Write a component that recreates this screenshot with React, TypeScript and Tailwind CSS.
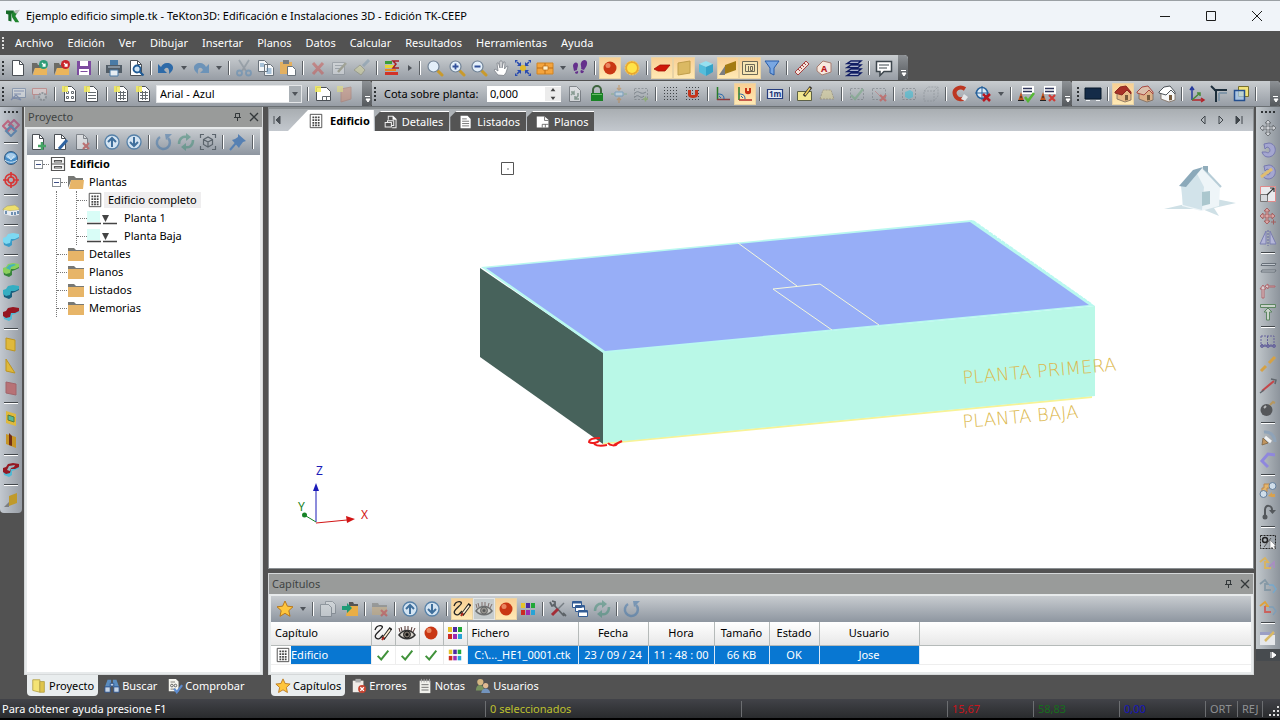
import type { ReactNode } from "react";
import { clsx } from "clsx";

const page = <path d="M3.5 1.5h7l4 4v11h-11z" fill="#fff" stroke="#4a4f55" />;
const pageFold = <path d="M10.5 1.5v4h4" fill="none" stroke="#4a4f55" />;
const folder = (
  <>
    <path d="M1 4h5l1 2h4v3H4l-3 7z" fill="#6b6b66" />
    <path d="M4 9h12v7H2z" fill="#eab55c" />
  </>
);
const spark = <path d="M1 1h6v6H1z" fill="#f2ea5e" opacity=".85" />;
const dashed = <path d="M2.5 3.5h13v11h-13z" fill="none" stroke="#6c7378" strokeDasharray="2 1.5" />;
const grid16 = "M2 2h1v1H2zM5 2h1v1H5zM8 2h1v1H8zM11 2h1v1h-1zM14 2h1v1h-1zM2 5h1v1H2zM5 5h1v1H5zM8 5h1v1H8zM11 5h1v1h-1zM14 5h1v1h-1zM2 8h1v1H2zM5 8h1v1H5zM8 8h1v1H8zM11 8h1v1h-1zM14 8h1v1h-1zM2 11h1v1H2zM5 11h1v1H5zM8 11h1v1H8zM11 11h1v1h-1zM14 11h1v1h-1zM2 14h1v1H2zM5 14h1v1H5zM8 14h1v1H8zM11 14h1v1h-1zM14 14h1v1h-1z";
const lens = (
  <>
    <path d="M11 11l5 5" stroke="#c99a2c" strokeWidth="3" strokeLinecap="round" />
    <circle cx="7.5" cy="7.5" r="5.5" fill="#e3effa" stroke="#718396" strokeWidth="1.2" />
  </>
);
const star = <path d="M9 1l2.4 5.2 5.6.6-4.2 3.8 1.2 5.7-5-3-5 3 1.2-5.7L1 6.8l5.6-.6z" fill="#ffc63c" stroke="#b9781d" />;
const check = (color: string) => <path d="M3 10l4 4 8-10" fill="none" stroke={color} strokeWidth="2.2" />;
const cross = <path d="M10 10l6 6m0-6l-6 6" stroke="#cf3b35" strokeWidth="2.2" />;
const roundArrow = (d: string) => (
  <>
    <circle cx="9" cy="9" r="7" fill="#d4e4f2" stroke="#5580a8" strokeWidth="1.3" />
    <path d={d} fill="none" stroke="#3f6f9c" strokeWidth="2" />
  </>
);
// the L-shaped block of the volume tools
const solid = (top: string, side: string) => (
  <>
    <path d="M1 8l1 6 5 2 3-2v-4l3-1 4-2V4L9 5z" fill={side} />
    <path d="M1 11V7l3-1 2-3 5-1 6 1v3l-4 2H9l-1 4-4 1z" fill={top} />
  </>
);
const docBadge = (color: string) => (
  <>
    {folder}
    <circle cx="12.5" cy="5.5" r="4.5" fill={color} />
    <path d="M11 4l3 3m0-2.5V7h-2.5" fill="none" stroke="#fff" strokeWidth="1.3" />
  </>
);
const house = (roof: string, wall: string, line: string) => (
  <>
    <path d="M3 7l5 2 5-4 4 4v6l-6 2-8-3z" fill={wall} stroke="#7c6a5a" strokeWidth=".8" />
    <path d="M1 7l5-5 6-1 5 6v2l-4-4-5 5-7-2z" fill={roof} stroke={line} strokeWidth="1" />
    <path d="M11 10h3v5l-3 .5z" fill="#765b3d" />
  </>
);

// every drawing sits in an 18 x 18 box
const icons: Record<string, ReactNode> = {
  new: <>{page}{pageFold}</>,
  open: docBadge("#2e9c78"),
  close: docBadge("#c9252b"),
  save: <><path d="M2 2h14v14H2z" fill="#7d4ba0" /><path d="M5 2h8v5H5zM4 10h10v6H4z" fill="#fff" /><path d="M5.5 12.5h7" stroke="#7d4ba0" /></>,
  print: <><path d="M5 1h8v5H5z" fill="#4a7ba6" /><path d="M1 6h16v8H1z" fill="#525d67" /><path d="M5 11h8v6H5z" fill="#e8eef3" stroke="#4a7ba6" /><path d="M3 8h12" stroke="#b8c8d6" /></>,
  preview: <>{page}{pageFold}<circle cx="10" cy="10" r="3.5" fill="#cfe4f5" stroke="#1f5b96" strokeWidth="1.8" /><path d="M12.5 12.5l4 4" stroke="#1f5b96" strokeWidth="2.2" /></>,
  undo: <path d="M1 5v9h9l-3-3c2-4 6-3 5 4 7-5 4-11-2-11-3 0-5 2-6 4z" fill="#2d6aa8" />,
  redo: <path d="M17 5v9H8l3-3c-2-4-6-3-5 4C-1 10 2 4 8 4c3 0 5 2 6 4z" fill="#6c93b8" />,
  cut: <g fill="none" stroke="#7b8791" strokeWidth="1.8"><path d="M4 1l7 11M14 1L7 12" /><circle cx="4.5" cy="14" r="2.5" stroke="#5688b4" /><circle cx="13.5" cy="14" r="2.5" stroke="#5688b4" /></g>,
  copy: <><path d="M1.5 1.5h6l3 3v8h-9zM7.5 5.5h6l3 3v8h-9z" fill="#f4f6f8" stroke="#6a737b" /><path d="M3 5h4M3 7h4M9.5 10h5M9.5 12h5M9.5 14h5" stroke="#5b8db8" /></>,
  paste: <><path d="M1 3h12v12H1z" fill="#e3b060" /><path d="M4 1h6v4H4z" fill="#787c80" /><path d="M8.5 7.5h5l3 3v6h-8z" fill="#fff" stroke="#6a737b" /></>,
  erase: <path d="M4 4l10 11M14 4L4 15" stroke="#c9524e" strokeWidth="3" />,
  editProps: <><path d="M1.5 3.5h12v12h-12z" fill="#e3e6e9" stroke="#868d94" /><path d="M4 6.5h8M4 9.5h5" stroke="#8b949c" /><path d="M7 13l8-9" stroke="#8d8d70" strokeWidth="2.5" /></>,
  brush: <><path d="M10 7l6-6" stroke="#7c96aa" strokeWidth="3" /><path d="M7 6l5 5-4 5-7-5z" fill="#d8d79a" stroke="#8b8c6c" /></>,
  sumColumns: <><path d="M2 2h7v3H2z" fill="#3a9c3a" /><path d="M2 6h10v3H2z" fill="#e6d637" /><path d="M2 10h11v2H2z" fill="#e88a1e" /><path d="M2 13h13v3H2z" fill="#d23227" /><path d="M16 2h-6l3 3-3 4h6" fill="none" stroke="#a62027" strokeWidth="1.5" /></>,
  zoom: lens,
  zoomIn: <>{lens}<path d="M4.5 7.5h6m-3-3v6" stroke="#31509a" strokeWidth="1.8" /></>,
  zoomOut: <>{lens}<path d="M4.5 7.5h6" stroke="#31509a" strokeWidth="1.8" /></>,
  hand: <path d="M6 16L2 11l1-1 3 2-1-8h1.5L8 9V2h2v7l1.5-6H13l-.5 7L15 7l1 .5-2 6-2 3z" fill="#fff" stroke="#7c8289" strokeWidth=".8" />,
  fit: <><path d="M3 3l4 4M15 3l-4 4M3 15l4-4M15 15l-4-4" stroke="#284bb0" strokeWidth="1.6" /><path d="M7 3v4H3zM11 3v4h4zM7 15v-4H3zM11 15v-4h4z" fill="#284bb0" /><path d="M1 1h3L1 4zM17 1h-3l3 3zM1 17h3l-3-3zM17 17h-3l3-3z" fill="#284bb0" /><circle cx="9" cy="9" r="3" fill="#e0b92e" /></>,
  planes: <><path d="M1 4h16v11H1z" fill="#f4a43d" stroke="#d18422" /><path d="M9 4v11M1 9h16" stroke="#b86c19" /><path d="M7 7h5v4H7z" fill="#fff1cd" stroke="#b86c19" strokeWidth=".7" /></>,
  feet: <path d="M2 7c0-4 5-5 5-1 0 2-1 3-1 5l-3 1zM4 13l3-1c1 3-3 4-3 1zM10 4c2-5 7-3 6 1 0 2-2 4-3 6l-3-1c1-2-1-4 0-6zM10 11l3 1c-1 4-5 2-3-1z" fill="#65308c" />,
  sphere: <><circle cx="9" cy="9" r="6.5" fill="#c93714" /><circle cx="7" cy="6.5" r="2.5" fill="#f39a72" opacity=".8" /></>,
  sun: <><circle cx="9" cy="9" r="7" fill="#e9a82e" strokeDasharray="2 1" stroke="#f6cb62" /><circle cx="9" cy="9" r="5" fill="#ffe348" /></>,
  slab: <path d="M1 10l6-4h10l-5 6H5z" fill="#cf1808" stroke="#a40f05" strokeWidth=".8" />,
  wall: <path d="M3 4l12-2v12L3 16z" fill="#dbb963" stroke="#c09e4b" />,
  cube: <><path d="M2 5l7-3 7 3-7 3z" fill="#96e0f0" /><path d="M2 5l7 3v9l-7-4z" fill="#54bddb" /><path d="M16 5L9 8v9l7-4z" fill="#35a3c8" /></>,
  shade: <><path d="M0 16l6-9v9z" fill="#7c7e80" /><path d="M6 6l11-4v9L6 15z" fill="#a37b13" /></>,
  wallShade: <><path d="M2 16l5-5v5z" fill="#7c7e80" /><path d="M7 5l8-3v10l-8 3z" fill="#c09a2b" /></>,
  frame: <g fill="#f7e6b4" stroke="#6e6a58"><path d="M1.5 2.5h15v13h-15zM4.5 5.5h9v7h-9z" /><path d="M7.5 7v5M9.5 11.5v-4h2v4z" fill="none" /></g>,
  filter: <path d="M2 2h14l-5 7v7l-4-2V9z" fill="#79a7e2" stroke="#285ca9" />,
  ruler: <><path d="M2 13L13 2l3 3L5 16z" fill="#f4e2da" stroke="#a64040" /><path d="M5 10l2 2m0-4l2 2m0-4l2 2m0-4l2 2" stroke="#a64040" /></>,
  tag: <><path d="M2 8l6-6 8 2v9l-9 3-5-4z" fill="#f8e9df" stroke="#a77c70" /><text x="6" y="13" fontSize="9" fontWeight="700" fill="#b8181c">A</text></>,
  layers: <g fill="#dfe4ee" stroke="#101d64" strokeWidth="1.4"><path d="M2 4.5L6 2h10l-3 2.5zM2 8.500L6 6h10l-3 2.500zM2 12.500L6 10h10l-3 2.500zM2 16.500L6 14h10l-3 2.500z" /></g>,
  comment: <><path d="M1.5 2.5h15v10H9l-4 4v-4H1.5z" fill="#fff" stroke="#3d464d" strokeWidth="1.5" /><path d="M4 6h10M4 9h8" stroke="#3d464d" /></>,
  form: <><path d="M3.5 3.5h13v9h-13z" fill="#e5e9ed" stroke="#62799c" /><path d="M5 6h10M5 9h7M2 15l5-5m0 0l5 5M3 12l9 3" stroke="#526ba0" strokeWidth="1.2" fill="none" /></>,
  gear: <><path d="M1.5 3.5h14v6h-14zM3 9v5" fill="#eed5d4" stroke="#c36762" /><circle cx="11.5" cy="11.5" r="3.5" fill="#c7c9cc" stroke="#72777c" strokeWidth="2" strokeDasharray="2 1" /></>,
  table: <>{page}<path d="M5.5 6.5h2v2h-2zM10.5 6.5h2v2h-2zM5.5 11.5h2v2h-2zM10.5 11.5h2v2h-2z" fill="none" stroke="#656b70" />{spark}</>,
  lines: <>{page}<path d="M5 7.5h8M5 10.5h8M5 13.5h8" stroke="#656b70" />{spark}</>,
  sheet: <>{page}<path d="M5 7.5h8M5 10.5h8M5 13.5h8M7.5 6v9M10.5 6v9" stroke="#656b70" />{spark}</>,
  blank: <><path d="M2.5 2.5h10l4 4v9h-14z" fill="#fff" stroke="#4a4f55" /><path d="M8.5 15v-3.5h8M12.5 12v3" fill="none" stroke="#61676c" />{spark}</>,
  door: <><path d="M5 4l10-2v12L5 17z" fill="#cf8c73" stroke="#af7361" />{spark}</>,
  refreshDoc: <>{page}<path d="M5 10l3-3v3m0-3H5M12 8v3l-3 3m0-3v3h4" fill="none" stroke="#60836c" strokeWidth="1.5" /></>,
  lock: <><path d="M5 8V5a4 4 0 018 0v3" fill="none" stroke="#3e643e" strokeWidth="2" /><path d="M3 8h12v8H3z" fill="#198325" /><path d="M4 9.5h10" stroke="#69bc68" /></>,
  updown: <><path d="M5 7h8v4H5z" fill="#c8e4f8" stroke="#4289b8" /><path d="M9 0v5M9 13v5M7 3l2 2 2-2M7 15l2-2 2 2" fill="none" stroke="#c48238" strokeWidth="1.3" /><path d="M1 9h3m10 0h3" stroke="#63a66e" /></>,
  wave: <>{dashed}<path d="M3 8c4-4 5 3 11-1M3 12c4-4 5 3 9-1" fill="none" stroke="#48545d" /><path d="M11 14h5m-2.5-2.5v5" stroke="#78ac40" strokeWidth="1.5" /></>,
  grid: <path d={grid16} fill="#3f4448" />,
  gridSnap: <><path d={grid16} fill="#3f4448" /><path d="M4 5h3v5h4V5h3v5c0 4-10 4-10 0z" fill="#c4351c" /></>,
  angle: <><path d="M3.5 2v13" stroke="#297c28" strokeWidth="1.5" /><path d="M3 14.5h13" stroke="#8b3a3c" strokeWidth="1.5" /><path d="M4 9c5 0 6 2 6 5M5 11l2 2" fill="none" stroke="#2468ad" /></>,
  angleSnap: <><path d="M3 2v13" stroke="#297c28" strokeWidth="1.5" /><path d="M3 15h13" stroke="#b4312c" strokeWidth="1.5" /><path d="M3 9c5 0 6 2 6 5M5 11l2 2" fill="none" stroke="#2468ad" /><path d="M9 3h2v3h2V3h2v4c0 3-6 3-6 0z" fill="#c43114" /></>,
  meter: <><path d="M1.5 4.5h15v9h-15z" fill="#e7edf6" stroke="#263d7e" strokeWidth="1.2" /><text x="3" y="12" fontSize="8" fontWeight="700" fill="#1c3474">1m</text></>,
  pencil: <><path d="M1.5 6.5h14v9h-14z" fill="#f1e792" stroke="#5c6046" /><path d="M8 11l7-9" stroke="#33312c" strokeWidth="3" /><path d="M9 10l5-7" stroke="#f2d05c" strokeWidth="1.5" /></>,
  region: <path d="M2 14l3-9h8l3 9z" fill="#e7d995" stroke="#94855d" strokeDasharray="2 1" />,
  regionOk: <>{dashed}{check("#6ca67a")}</>,
  regionNo: <>{dashed}<path d="M5 6l5 5" stroke="#c26a6c" />{cross}</>,
  selCube: <>{dashed}<path d="M5 7l5-2 3 2v5l-4 2-4-2z" fill="#2cc0da" /></>,
  selWire: <path d="M2 6l4-4h10v9l-4 5H2zM2 6h10v10m0-10l4-4" fill="none" stroke="#858b91" strokeDasharray="2 1" />,
  magnet: <><path d="M13 4C7 0 1 5 3 10s7 5 9 3" fill="none" stroke="#bd3722" strokeWidth="4" /><path d="M12 9l4 3-3 4-4-2z" fill="#e3e5e7" /></>,
  snapOff: <><circle cx="8" cy="8" r="5.5" fill="#dceaf6" stroke="#28629b" strokeWidth="1.5" /><path d="M8 1v14M1 8h14" stroke="#28629b" /><path d="M9 9l7 7m0-7l-7 7" stroke="#b71820" strokeWidth="2.5" /></>,
  listOk: <><path d="M5 1h12v8H5z" fill="#fff" /><path d="M6 3.5h9M6 6.5h9" stroke="#2e355a" strokeWidth="1.5" /><path d="M1 16l3-9 3 9z" fill="#bf531e" /><path d="M1 15.5h6M3 12h2" stroke="#222" /><path d="M8 12l3 4 6-8" fill="none" stroke="#55b735" strokeWidth="2.5" /></>,
  listNo: <><path d="M5 1h12v8H5z" fill="#fff" /><path d="M6 3.5h9M6 6.5h9" stroke="#2e355a" strokeWidth="1.5" /><path d="M1 16l3-9 3 9z" fill="#bf531e" /><path d="M1 15.5h6M3 12h2" stroke="#222" />{cross}</>,
  screen: <><path d="M1 3h16v11H1z" fill="#142b48" stroke="#071829" /><path d="M2 15.5h4m6 0h4" stroke="#f2f5f7" /></>,
  houseRed: house("#a83126", "#e7bb87", "#8b2a22"),
  houseOpen: house("#dcc0ac", "#ddb188", "#a84a42"),
  houseWhite: house("#fff", "#f6f7f8", "#4d5358"),
  axes: <g fill="none" strokeWidth="1.5"><path d="M4 15V3M2 5l2-3 2 3" stroke="#263a9d" /><path d="M4 15h12m-3-2l3 2-3 2" stroke="#b2232a" /><path d="M4 15l8-7m-3 0h3v3" stroke="#488a37" /></g>,
  corner: <><path d="M4 5h13M6 4v13" stroke="#1d2e3b" strokeWidth="2" /><path d="M1 1l5 5" stroke="#1d2e3b" strokeWidth="2" /><path d="M9 8h8M9 8v8" stroke="#8196a8" strokeWidth="2" /></>,
  windows: <><path d="M6.5 1.5h10v10h-10z" fill="#f3e37a" stroke="#78702d" /><path d="M2.5 5.5h10v10h-10z" fill="#a9cdf4" fillOpacity=".7" stroke="#244f8f" strokeWidth="1.5" /></>,
  links: <g fill="none" strokeWidth="2"><path d="M6 2l5 5-5 5-5-5z" stroke="#bc6680" /><path d="M12 1l5 5-5 5-5-5z" stroke="#a56385" /><path d="M9 7l5 5-5 5-5-5z" stroke="#5d83aa" /></g>,
  globe: <><circle cx="9" cy="9" r="6.5" fill="#468dc8" stroke="#3b5d80" /><ellipse cx="9" cy="7" rx="5" ry="3" fill="#a8cdea" /><path d="M3 11c3 3 9 3 12 0M6 7l3 4 3-4" stroke="#d5e9f7" fill="none" /></>,
  target: <g fill="none" stroke="#d63736" strokeWidth="1.7"><circle cx="9" cy="9" r="6" /><circle cx="9" cy="9" r="3" /><path d="M9 1v6M9 11v6M1 9h6M11 9h6" /></g>,
  building: <><path d="M1 8l4-3 8-1 4 3v2l-9 1-7-1z" fill="#eddf6b" stroke="#a8a37b" strokeWidth=".7" /><path d="M2 9l6 1 9-1v5l-8 1-7-2z" fill="#e6eaf0" /><path d="M4 10v3M10 11v3M13 11v3M16 10v3" stroke="#49749e" strokeWidth="1.5" /></>,
  solidCyan: solid("#7dd9f2", "#3a9cc7"),
  solidGreen: <>{solid("#8bd05d", "#37853b")}<path d="M4 7l3-3 5-1 2 1-5 2-1 3z" fill="#45b4b8" /></>,
  solidTeal: solid("#35aec2", "#175f7d"),
  solidRed: solid("#951721", "#51bad4"),
  panel: <path d="M4 3l9 2v11l-9-2z" fill="#dfb93c" stroke="#bd951f" />,
  triangle: <path d="M4 2l9 14-9-2z" fill="#dfb93c" stroke="#bd951f" />,
  pink: <path d="M4 3l10 2v11L4 14z" fill="#b77276" stroke="#a2656b" />,
  windowIn: <><path d="M4 2l10 3v12L4 14z" fill="#dfb93c" /><path d="M6 6l6 2v5l-6-2z" fill="#58b89a" stroke="#577a3a" /></>,
  doorIn: <><path d="M4 3l10 3v11L4 13z" fill="#c69526" /><path d="M7 2l3 3v10l-3-1z" fill="#722f15" /></>,
  redHole: <>{solid("#951721", "#51bad4")}<path d="M5 9l2-4 6-1-1 2-3 1-1 3z" fill="#9bb7c1" /></>,
  move: <path d="M9 1L6 4h2v4H4V6L1 9l3 3v-2h4v4H6l3 3 3-3h-2v-4h4v2l3-3-3-3v2h-4V4h2z" fill="#cfd2d6" stroke="#6a6e73" strokeWidth=".9" />,
  rotate: <path d="M5 3l5-1c9 1 8 14-1 14-3 0-5-2-6-5h4c4 3 6-4 1-5L6 8z" fill="#a4a6d0" stroke="#7779b0" />,
  rotateRef: <><path d="M5 3l5-1c9 1 8 14-1 14-3 0-5-2-6-5h4c4 3 6-4 1-5L6 8z" fill="#a4a6d0" stroke="#7779b0" /><path d="M2 14L13 6" stroke="#e0bd70" strokeWidth="3" /></>,
  scale: <><path d="M1.5 1.5h15v15h-15z" fill="#e9eaed" stroke="#e08a8a" /><path d="M1.5 9.5h7v7h-7z" fill="#d7d9dd" stroke="#777" /><path d="M8 10l7-7m-4 0h4v4" fill="none" stroke="#333" strokeWidth="1.2" /></>,
  copyMove: <><path d="M8 1L5 4h2v4H4V6L1 9l3 3v-2h3v4H5l3 3 3-3H9v-4h4v2l3-3-3-3v2H9V4h2z" fill="#d9a4a4" stroke="#a25e5e" strokeWidth=".9" /><path d="M12 15h5m-2.5-2.5v5" stroke="#a25e5e" /></>,
  mirror: <><path d="M7 2v13H1zM11 2v13h6z" fill="#b4b6d8" stroke="#7b7eb0" /><path d="M9 1v16" stroke="#65699f" strokeDasharray="2 1" /></>,
  parallel: <path d="M2 6.5h14l1-2H3zM2 13h14l1-2H3z" fill="#c2c8ce" stroke="#687079" />,
  extend: <path d="M3 17V8H1l3-4 3 4H5v9zM16 5H9V3L6 5l3 3V6h7z" fill="#d9cdd0" stroke="#b0666c" />,
  trim: <path d="M1.5 1.5h15v3h-15zM7.5 17V9H5l4-4 4 4h-2.5v8z" fill="#cbd4cc" stroke="#5d8662" />,
  divide: <g fill="none" stroke="#66639c"><path d="M2 3h13v9H2zM8.500 3v9" strokeDasharray="2 1" /><path d="M2 13h14" strokeWidth="1.5" /><circle cx="3" cy="13" r="1.5" /><circle cx="9" cy="13" r="1.5" /><circle cx="15" cy="13" r="1.5" /></g>,
  split: <path d="M2 16l5-5m3-3l6-6" stroke="#d5a145" strokeWidth="3" />,
  join: <><path d="M3 14L15 4" stroke="#c44649" strokeWidth="2" /><path d="M1 16l4-3M12 2l5 1-1 4" fill="none" stroke="#60666d" strokeWidth="1.5" /></>,
  bomb: <><circle cx="7.5" cy="11" r="6" fill="#55575a" /><path d="M5 9l2-2" stroke="#b7b9bb" strokeWidth="2" /><path d="M11 6l3-3 2 1" fill="none" stroke="#b6975f" strokeWidth="2" /></>,
  crayon: <><path d="M3 16l1-7 5 5z" fill="#c1955f" stroke="#7c6444" strokeWidth=".8" /><path d="M5 3c7-1 11 5 11 10" fill="none" stroke="#8fa3b8" strokeWidth="3" /><path d="M6 8l6 5" stroke="#f1f2f2" strokeWidth="3" /></>,
  poly: <path d="M16 4L9 3l-6 7 6 6" fill="none" stroke="#8f87dd" strokeWidth="3" />,
  swap: <><path d="M5 3h7v4H8v4H3V7h2z" fill="#e4b56b" stroke="#bd874b" /><circle cx="4.5" cy="13" r="3.5" fill="#d0deea" stroke="#637e9c" /><circle cx="13.5" cy="5" r="3.5" fill="#d0deea" stroke="#637e9c" /><path d="M9 15l4-4v2h3v3h-3z" fill="#d8a14e" /></>,
  hook: <><path d="M6 14V7c0-6 7-5 7 0" fill="none" stroke="#54585c" strokeWidth="2" /><path d="M10 7h7l-3.5 4z" fill="#54585c" /><circle cx="6" cy="14" r="2.5" fill="#54585c" /></>,
  select: <><path d="M1.5 2.5h15v13h-15z" fill="none" stroke="#222" strokeDasharray="2 1" /><circle cx="6" cy="7" r="2.5" fill="none" stroke="#222" strokeWidth="1.5" /><path d="M5 14l7-9" stroke="#555" /><path d="M11 7v9l2-2 2 3 1-1-1-3h2z" fill="#fff" stroke="#777" strokeWidth=".6" /></>,
  flowA: <><path d="M1 7l5-4 3 4H6v6h6" fill="none" stroke="#d9b460" strokeWidth="1.8" /><path d="M10 12l5-5v6" fill="none" stroke="#aa8ac4" strokeWidth="1.5" /></>,
  flowB: <><path d="M1 7l5-4 3 4H6v6h6" fill="none" stroke="#8699a6" strokeWidth="1.8" /><path d="M10 8h4l3 4-3 4" fill="none" stroke="#77a8cb" strokeWidth="1.5" /></>,
  flowC: <><path d="M1 7l5-4 3 4H6" fill="none" stroke="#e0a23a" strokeWidth="1.8" /><path d="M6 7v6h6" fill="none" stroke="#ca615c" strokeWidth="1.8" /><path d="M10 8h4l3 4-3 4" fill="none" stroke="#7f9eb7" strokeWidth="1.5" /></>,
  note: <><path d="M1 3h15v13H1z" fill="#e6e8eb" /><path d="M1 3h15v3H1z" fill="#9b9fc4" /><path d="M6 12l9-9" stroke="#d8b966" strokeWidth="2.5" /></>,
  add: <>{page}{pageFold}<path d="M9 13h8m-4-4v8" stroke="#46a565" strokeWidth="2.5" /></>,
  edit: <>{page}{pageFold}<path d="M8 16l8-9" stroke="#2e63a1" strokeWidth="3" /></>,
  remove: <>{page}{pageFold}{cross}</>,
  up: roundArrow("M9 14V5M5 9l4-4 4 4"),
  down: roundArrow("M9 4v9M5 9l4 4 4-4"),
  reload: <><path d="M5 4a6.500 6.500 0 108 1" fill="none" stroke="#3d72a8" strokeWidth="2.5" /><path d="M10 1h7l-6 6z" fill="#3d72a8" /></>,
  sync: <><path d="M2 11c0-6 4-8 8-7M16 7c0 6-4 8-8 7" fill="none" stroke="#3d8c74" strokeWidth="2.5" /><path d="M9 0l5 4-5 4zM9 18l-5-4 5-4z" fill="#3d8c74" /></>,
  box: <g fill="none" stroke="#5b646c" strokeWidth="1.2"><path d="M1.5 5V1.5H5M13 1.5h3.5V5M1.5 13v3.5H5M13 16.5h3.5V13" /><path d="M4.5 6.5L9 4l4.5 2.5v5L9 14l-4.5-2.5zM4.5 6.5L9 9l4.5-2.5M9 9v5" /></g>,
  pin: <><path d="M9 1l8 7-3 1-3 4-1 2-7-8 3-1 3-2z" fill="#5680b3" /><path d="M7 10l-6 7" stroke="#5680b3" strokeWidth="2" /></>,
  star,
  pages: <path d="M1.5 4.5h8l3 3v9h-11zM6.5 1.5h7l3 3v9h-4v-6l-3-3h-3z" fill="#e4e8ea" stroke="#6c757d" />,
  importDir: <><path d="M8 2h4l1 2h4v2H8z" fill="#555" /><path d="M7 6h10v10H5z" fill="#e9ae46" /><path d="M1 6h5V3l5 5-5 5v-3H1z" fill="#1e9b76" /></>,
  delDir: <><path d="M1 3h6l1 2h8v2H1z" fill="#7a7973" /><path d="M1 7h15v8H1z" fill="#c7a874" />{cross}</>,
  pen: <><path d="M1 6c2-6 9-5 7-2S-1 11 2 14s6-2 7-3" fill="none" stroke="#222" strokeWidth="1.3" /><path d="M9 15l8-11" stroke="#222" strokeWidth="3.5" /><path d="M10 13.5l6-8" stroke="#fff0d4" strokeWidth="1.5" /><path d="M8 16l2-3" stroke="#b32b20" strokeWidth="2" /></>,
  eye: <><path d="M1 11c4-6 12-6 16 0-4 5-12 5-16 0z" fill="#d6d2ca" stroke="#343434" strokeWidth="1.5" /><circle cx="9" cy="10.5" r="3.5" fill="#756e64" stroke="#222" /><circle cx="9" cy="10.5" r="1.5" fill="#111" /><path d="M2 8L1 4m3 3L3 3m4 3V2m3 4V2m3 5l1-4m1 5l2-4" stroke="#53332f" /></>,
  palette: <><path d="M2 3h4v5H2z" fill="#e4c42b" /><path d="M7 3h4v5H7z" fill="#4b2aa1" /><path d="M12 3h4v5h-4z" fill="#20a837" /><path d="M2 10h4v5H2z" fill="#cb2b21" /><path d="M7 10h4v5H7z" fill="#9d2cb5" /><path d="M12 10h4v5h-4z" fill="#27a3d6" /></>,
  tools: <><path d="M4 4l11 12" stroke="#5d6368" strokeWidth="1.8" /><path d="M15 3l-6 6" stroke="#777e84" strokeWidth="1.5" /><path d="M9 9l-6 6" stroke="#a32d38" strokeWidth="3" /><path d="M1 2l2 4 3-1V2L3 1M14 13l3 3" fill="none" stroke="#5d6368" strokeWidth="1.8" /></>,
  cascade: <g fill="#fff" stroke="#335c94"><path d="M1.5 1.5h9v6h-9zM4.5 5.5h9v6h-9zM7.5 10.5h9v6h-9z" /><path d="M2 2.5h8M5 6.5h8M8 11.5h8" strokeWidth="1.8" /></g>,
  tick: check("#40923a"),
  floors: <><path d="M2.5 1.5h13v15h-13z" fill="#fff" stroke="#444" /><path d="M5 4h2v2H5zM8 4h2v2H8zM11 4h2v2h-2zM5 7h2v2H5zM8 7h2v2H8zM11 7h2v2h-2zM5 10h2v2H5zM8 10h2v2H8zM11 10h2v2h-2zM5 13h2v2H5zM8 13h2v2H8zM11 13h2v2h-2z" fill="#444" /></>,
  cabinet: <g fill="none" stroke="#555"><path d="M2.5 2.5h13v13h-13zM2.5 9h13M5.5 5.5h7v1.5h-7zM5.5 11.5h7v1.5h-7z" strokeWidth="1.2" /></g>,
  folder: <><path d="M1 3h6l2 2h8v2H1z" fill="#777875" /><path d="M1 6h16v10H1z" fill="#e7b568" /></>,
  folderOpen: <><path d="M1 3h6l2 2h7v3H4L1 15z" fill="#777875" /><path d="M4 7h13l-1 9H2z" fill="#e7b568" /></>,
  detail: <><path d="M5.5 6V1.5h6l4 4v11h-5" fill="none" stroke="#eee" strokeWidth="1.3" /><path d="M11 1v5h5z" fill="#fff" /><path d="M1.5 9.5h8v6h-8zM4.5 9V7.5h8v6H10" fill="none" stroke="#eee" strokeWidth="1.3" /></>,
  listing: <><path d="M2 1h9l4 4v12H2z" fill="#fff" /><path d="M4 5h6M4 8h9M4 11h9M4 14h9" stroke="#555" /></>,
  plan: <><path d="M1 2h10l5 4v10H1z" fill="#fff" /><path d="M11 2v5h5M8 16v-4h8M12 12v4" fill="none" stroke="#555" /></>,
  yellowDir: <><path d="M2 2h8v14l-8-2z" fill="#f4e375" stroke="#b5a34a" /><path d="M10 4h5v12h-5z" fill="#dfc44b" stroke="#b5a34a" /></>,
  binoculars: <><path d="M4 2h4v8H1zM10 2h4l3 8h-7z" fill="#5a8cc0" /><path d="M1 10h6v6H1zM11 10h6v6h-6zM7 6h4v3H7z" fill="#c4d3e5" stroke="#284d87" /></>,
  verify: <><path d="M2 1h8l3 3v11H2z" fill="#f5f5ef" /><path d="M4 4.5h5M4 12.5h5" stroke="#77736d" /><circle cx="5.5" cy="8.5" r="1.5" fill="none" stroke="#555" /><circle cx="9.5" cy="8.5" r="1.5" fill="none" stroke="#555" /><path d="M8 12l3 4 6-8" fill="none" stroke="#5c8bce" strokeWidth="2.5" /></>,
  errors: <><path d="M2 3h12v13H2z" fill="#f0ece7" /><path d="M5 1h6v4H5z" fill="#aaa" /><circle cx="12.5" cy="12.5" r="4.5" fill="#c74330" /><path d="M10.5 10.5l4 4m0-4l-4 4" stroke="#fff" strokeWidth="1.5" /></>,
  notes: <><path d="M3 3h12v14H3z" fill="#f1f1ec" /><path d="M5 1v4M8 1v4M11 1v4M14 1v4" stroke="#aaa" /><path d="M5 7.5h8M5 10.5h8M5 13.5h8" stroke="#686868" /></>,
  users: <><circle cx="6" cy="4.5" r="3.5" fill="#d6b782" /><path d="M1 14c0-8 9-8 9 0z" fill="#78935f" /><circle cx="12" cy="8.5" r="3" fill="#e0ba92" /><path d="M7 17c0-7 10-7 10 0z" fill="#7394bd" /></>,
  logo: <><path d="M0 2h10v4H7v10l-4-1V7L0 6z" fill="#176b29" /><path d="M7 6l6-4 3 1-4 6 5 8h-5L8 11z" fill="#1f852e" /><path d="M11 2l7-1-4 5-3-1z" fill="#b9beba" /></>,
};

function Icon({ name, className = "size-4.5" }: { name: string; className?: string }) {
  return (
    <svg viewBox="0 0 18 18" className={clsx("shrink-0", className)} aria-hidden="true">
      {icons[name]}
    </svg>
  );
}

// "|" is a separator, "v" and ">" are small arrows.
// Prefixes: "*" pressed, "#" pressed but grey, "~" disabled
function Tools({ items, vertical = false }: { items: string[]; vertical?: boolean }) {
  return (
    <div className={clsx("flex shrink-0 items-center", vertical && "flex-col")}>
      {items.map((item, i) => {
        if (item === "|") {
          return vertical ? (
            <span key={i} className="flex h-2 items-center">
              <span className="h-0.5 w-3.5 border-t border-[#42474b] bg-white" />
            </span>
          ) : (
            <span key={i} className="flex w-2 justify-center">
              <span className="h-3.5 w-0.5 border-l border-[#5b6065] bg-white" />
            </span>
          );
        }
        if (item === "v" || item === ">") {
          return (
            <button key={i} aria-label="Más opciones" className="flex h-5 w-[13px] items-center justify-center">
              <svg viewBox="0 0 6 6" className="size-1.5" aria-hidden="true">
                <path d={item === "v" ? "M0 1h6L3 5z" : "M1 0v6l4-3z"} fill="#4f545a" />
              </svg>
            </button>
          );
        }
        const on = item[0] === "*";
        const grey = item[0] === "#";
        const dim = item[0] === "~";
        const name = on || grey || dim ? item.slice(1) : item;
        return (
          <button
            key={i}
            aria-label={name}
            className={clsx(
              "flex size-[22px] shrink-0 items-center justify-center",
              on && "border border-[#e8d3a6] bg-linear-to-b from-[#f9cf94] to-[#ffe9b4]",
              grey && "border border-[#e2e5e6] bg-[#c6cccd]",
            )}
          >
            <Icon name={name} className={clsx("size-4.5", dim && "opacity-50", grey && "opacity-60")} />
          </button>
        );
      })}
    </div>
  );
}

function Grip({ vertical = false }: { vertical?: boolean }) {
  return vertical ? (
    <span className="my-1 w-3.5 border-t-2 border-dotted border-[#2f3336]" />
  ) : (
    <span className="mx-0.5 h-3.5 w-[3px] shrink-0 border-l-2 border-dotted border-[#2f3336]" />
  );
}

function Overflow() {
  return (
    <button
      aria-label="Opciones de barra"
      className="ml-auto flex h-full w-2.5 shrink-0 items-end justify-center rounded-r-sm bg-linear-to-b from-[#8d9195] to-[#55595d] pb-1"
    >
      <svg viewBox="0 0 7 6" className="h-1.5 w-[7px]" aria-hidden="true">
        <path d="M1 .5h5M2 3h4L4 6z" stroke="#fff" fill="#fff" />
      </svg>
    </button>
  );
}

const barClass = "flex h-[25px] shrink-0 items-center rounded-r bg-linear-to-b from-[#c9cdd0] to-[#979da5]";

const menus = ["Archivo", "Edición", "Ver", "Dibujar", "Insertar", "Planos", "Datos", "Calcular", "Resultados", "Herramientas", "Ayuda"];

function TitleBar() {
  return (
    <header className="flex h-[31px] items-center border-t border-[#9ba0a5] bg-[#f0f4f9] pl-1.5 text-black">
      <Icon name="logo" className="size-3.5" />
      <h1 className="ml-1.5 flex-1">Ejemplo edificio simple.tk - TeKton3D: Edificación e Instalaciones 3D - Edición TK-CEEP</h1>
      {[
        ["Minimizar", "M1 6.5h10"],
        ["Maximizar", "M1.5 1.5h9v9h-9z"],
        ["Cerrar", "M1 1l10 10M11 1L1 11"],
      ].map(([label, d]) => (
        <button key={label} aria-label={label} className="flex h-full w-[46px] items-center justify-center">
          <svg viewBox="0 0 12 12" className="size-3" fill="none" stroke="#1c1c1c" aria-hidden="true">
            <path d={d} />
          </svg>
        </button>
      ))}
    </header>
  );
}

function PanelHeader({ title }: { title: string }) {
  return (
    <div className="flex h-5 items-center bg-[#999b9a] pl-[3px] text-[#3f4343]">
      <h2 className="flex-1">{title}</h2>
      <button aria-label="Fijar" className="flex w-4 justify-center">
        <svg viewBox="0 0 10 10" className="size-2.5" fill="none" stroke="#33383a" aria-hidden="true">
          <path d="M2.5 1.5h4v4h-4zM6.5 1v5M1 5.5h7M4.5 6v3" />
        </svg>
      </button>
      <button aria-label="Cerrar" className="flex w-4 justify-center">
        <svg viewBox="0 0 10 10" className="size-2.5" stroke="#33383a" aria-hidden="true">
          <path d="M1 1l8 8M9 1L1 9" strokeWidth="1.3" />
        </svg>
      </button>
    </div>
  );
}

function Toggle() {
  return (
    <button aria-label="Contraer" className="flex size-[9px] shrink-0 items-center justify-center border border-[#8a8f94] bg-white">
      <span className="h-px w-[5px] bg-[#3d4f86]" />
    </button>
  );
}

function Floor({ name }: { name: string }) {
  return (
    <li className="flex h-[18px] items-center">
      <span className="w-2.5 border-t border-dotted border-[#777]" />
      <svg viewBox="0 0 30 14" className="h-3.5 w-[30px]" aria-hidden="true">
        <path d="M0 0h13v11H0z" fill="#d9fdf7" />
        <path d="M0 12.5h14M16 12.5h14" stroke="#444" strokeWidth="1.5" />
        <path d="M15 4h7l-3.5 7z" fill="#444" />
      </svg>
      <span className="ml-[7px]">{name}</span>
    </li>
  );
}

function ProjectTree() {
  return (
    <div className="flex-1 bg-white pl-[7px] text-black">
      <div className="flex h-[18px] items-center">
        <Toggle />
        <span className="w-1.5 border-t border-dotted border-[#777]" />
        <Icon name="cabinet" />
        <span className="ml-[3px] font-bold">Edificio</span>
      </div>
      <div className="pl-[18px]">
        <div className="flex h-[18px] items-center">
          <Toggle />
          <span className="w-1.5 border-t border-dotted border-[#777]" />
          <Icon name="folderOpen" />
          <span className="ml-1">Plantas</span>
        </div>
        <div className="ml-1 border-l border-dotted border-[#777]">
          <ul className="ml-[19px] border-l border-dotted border-[#777]">
            <li className="flex h-[18px] items-center">
              <span className="w-2.5 border-t border-dotted border-[#777]" />
              <Icon name="floors" className="size-4" />
              <span className="ml-px bg-[#efeeef] px-1 leading-4">Edificio completo</span>
            </li>
            <Floor name="Planta 1" />
            <Floor name="Planta Baja" />
          </ul>
          <ul>
            {["Detalles", "Planos", "Listados", "Memorias"].map((name) => (
              <li key={name} className="flex h-[18px] items-center">
                <span className="w-2.5 border-t border-dotted border-[#777]" />
                <Icon name="folder" />
                <span className="ml-1">{name}</span>
              </li>
            ))}
          </ul>
        </div>
      </div>
    </div>
  );
}

function BottomTabs({ tabs }: { tabs: { label: string; icon: string }[] }) {
  return (
    <div className="flex h-6 items-start gap-0.5 pl-[3px] text-white">
      {tabs.map((tab, i) => (
        <button
          key={tab.label}
          className={clsx("flex h-[21px] items-center gap-0.5 rounded-b px-1", i === 0 && "bg-[#e9edee] text-black")}
        >
          <Icon name={tab.icon} className="size-4" />
          {tab.label}
        </button>
      ))}
    </div>
  );
}

const viewTabs = [
  { label: "Detalles", icon: "detail" },
  { label: "Listados", icon: "listing" },
  { label: "Planos", icon: "plan" },
];

function ViewTabs() {
  return (
    <div className="flex h-[22px] items-end bg-linear-to-b from-[#a9aeb2] to-[#c3c8ce]">
      <button aria-label="Primera pestaña" className="flex h-full w-[19px] items-center pl-1">
        <svg viewBox="0 0 8 8" className="size-2" aria-hidden="true">
          <path d="M1 0v8M7 0v8L3 4z" fill="#4b5157" stroke="#4b5157" />
        </svg>
      </button>
      <button className="flex h-[21px] items-center gap-1.5 bg-white pr-1 pl-5 font-bold text-black [clip-path:polygon(0_100%,20px_0,100%_0,100%_100%)]">
        <Icon name="floors" className="size-4" />
        Edificio
      </button>
      {viewTabs.map((tab) => (
        <button
          key={tab.label}
          className="ml-px flex h-5 items-center gap-1 border-t border-white bg-[#545454] pr-1.5 pl-[9px] text-white [clip-path:polygon(0_6px,6px_0,100%_0,100%_100%,0_100%)]"
        >
          <Icon name={tab.icon} className="size-3.5" />
          {tab.label}
        </button>
      ))}
      <div className="ml-auto flex h-full items-center gap-2.5 pr-2.5">
        {["M6 0v8L2 4z", "M2 0v8l4-4z", "M1 0v8l4-4zM7 0v8"].map((d, i) => (
          <button key={d} aria-label={["Anterior", "Siguiente", "Última"][i]}>
            <svg viewBox="0 0 8 8" className="size-2" stroke="#3f454a" fill={i === 2 ? "#3f454a" : "none"} aria-hidden="true">
              <path d={d} />
            </svg>
          </button>
        ))}
      </div>
    </div>
  );
}

function Scene() {
  return (
    <svg viewBox="269 131 984 434" className="block w-full" role="img" aria-label="Vista 3D del edificio">
      <path d="M603 443.5L1092 397" stroke="#f7f397" strokeWidth="2" />
      <path d="M480 268l123 84v92l-123-87z" fill="#47625b" />
      <path d="M603 352l492-46v90l-492 47z" fill="#b9f8e7" />
      <path d="M481 267l491-47 123 86-492 47z" fill="#b9f8f0" />
      <path d="M486 268l484-46 119 83-484 46z" fill="#97aef7" />
      <g fill="none" stroke="#f5f8dc">
        <path d="M738 243l59 43" />
        <path d="M832 330l-59-41 47-5 59 41" />
      </g>
      <path d="M973 221l118 83" stroke="#b9f8f0" strokeWidth="2" strokeDasharray="4 1" />
      <g fill="#dcb84e" fontFamily="DejaVu Sans, sans-serif" fontSize="18" fontWeight="200">
        <text transform="translate(963 384) rotate(-5)">PLANTA PRIMERA</text>
        <text transform="translate(963 428) rotate(-5)">PLANTA BAJA</text>
      </g>
      <path d="M600 438c-5 0-11 1-11 4 2 2 8 1 10-1M594 444c3 2 8 2 13 1M608 443c2 3 8 3 9 1M614 445l8-4" fill="none" stroke="#ee1c1c" strokeWidth="2" />
      <g fontSize="12">
        <path d="M316 522v-32" stroke="#1b1bb8" />
        <path d="M313 491l3-8 3 8z" fill="#1b1bb8" />
        <path d="M316 523l31-3" stroke="#d21515" />
        <path d="M346 516l9 3-8 4z" fill="#d21515" />
        <path d="M316 522l-10-6" stroke="#168326" />
        <circle cx="304.5" cy="515" r="2.5" fill="#168326" />
        <text x="316" y="475" fill="#1b1bb8">Z</text>
        <text x="361" y="519" fill="#d21515">X</text>
        <text x="298" y="511" fill="#168326">Y</text>
      </g>
      <path d="M501.5 162.5h12v12h-12z" fill="#fff" stroke="#555" />
      <path d="M507 168h2v2h-2z" fill="#bbb" />
      <g>
        <path d="M1164 209l30-7 12-5 30 6-22 5 5 8-17-7z" fill="#cfe0e6" />
        <path d="M1182 187l14-18 9-1 15 18-1 20-18 5-19-5z" fill="#eef5f8" />
        <path d="M1181 186l14-16 9 17-2 23-19-5z" fill="#d2e3ea" />
        <path d="M1179 186l14-16 10-3-17 20z" fill="#8ba9ba" />
        <path d="M1203 168l18 19" stroke="#b7cdd7" strokeWidth="2" />
        <path d="M1203 166h5v7l-5-4z" fill="#91adbb" />
        <path d="M1202 192l8-1v13l-8 2z" fill="#abc7ce" />
      </g>
    </svg>
  );
}

const headCell = "border-r border-[#b5bab9] px-1 font-normal";
const selCell = "border-r border-[#dbe9f7] bg-[#0877d2] text-center text-white";

function Chapters() {
  return (
    <table className="w-full table-fixed border-collapse bg-white text-black">
      <colgroup>
        <col className="w-[100px]" />
        <col className="w-6" />
        <col className="w-6" />
        <col className="w-6" />
        <col className="w-6" />
        <col className="w-[111px]" />
        <col className="w-[70px]" />
        <col className="w-[66px]" />
        <col className="w-[55px]" />
        <col className="w-[50px]" />
        <col className="w-[100px]" />
        <col />
      </colgroup>
      <thead>
        <tr className="h-6 border-b border-[#b5bab9] bg-linear-to-b from-white to-[#e8e8e8]">
          <th className={clsx(headCell, "text-left")}>Capítulo</th>
          {["pen", "eye", "sphere", "palette"].map((name) => (
            <th key={name} aria-label={name} className="border-r border-[#b5bab9]">
              <Icon name={name} className="mx-auto size-4.5" />
            </th>
          ))}
          <th className={clsx(headCell, "text-left")}>Fichero</th>
          {["Fecha", "Hora", "Tamaño", "Estado", "Usuario"].map((label) => (
            <th key={label} className={headCell}>{label}</th>
          ))}
          <th />
        </tr>
      </thead>
      <tbody>
        <tr className="h-[18px] border-b border-[#eeeeee]">
          <td className="border-r border-[#eeeeee]">
            <div className="flex items-center pl-1">
              <Icon name="floors" className="size-4" />
              <span className="h-[18px] flex-1 bg-[#0877d2] leading-[18px] text-white">Edificio</span>
            </div>
          </td>
          {["tick", "tick", "tick", "palette"].map((name, i) => (
            <td key={i} className="border-r border-[#eeeeee]">
              <Icon name={name} className="mx-auto size-4" />
            </td>
          ))}
          {["C:\\..._HE1_0001.ctk", "23 / 09 / 24", "11 : 48 : 00", "66 KB", "OK", "Jose"].map((value) => (
            <td key={value} className={clsx(selCell, "whitespace-nowrap")}>{value}</td>
          ))}
          <td />
        </tr>
      </tbody>
    </table>
  );
}

function StatusBar() {
  const cell = "border-l border-[#6c6e71] pl-1 leading-4";
  return (
    <footer className="flex h-[21px] items-center border-b-2 border-black bg-linear-to-b from-[#424349] to-[#292b2d] text-[#8f9193]">
      <span className="flex-1 pl-0.5 text-white">Para obtener ayuda presione F1</span>
      <span className={clsx(cell, "w-64 text-[#bdc02e]")}>0 seleccionados</span>
      <span className={clsx(cell, "h-4 w-[206px]")} />
      <span className={clsx(cell, "w-[86px] text-[#c9151b]")}>15,67</span>
      <span className={clsx(cell, "w-[86px] text-[#176d1d]")}>58,83</span>
      <span className={clsx(cell, "w-[86px] text-[#1515b8]")}>0,00</span>
      <span className={clsx(cell, "w-8")}>ORT</span>
      <span className={clsx(cell, "w-[25px]")}>REJ</span>
      <span className="flex h-4 w-[18px] items-end justify-end border-l border-[#6c6e71]">
        <svg viewBox="0 0 12 12" className="size-3" fill="#ddd" aria-hidden="true">
          <path d="M9 1h2v2H9zM9 5h2v2H9zM5 5h2v2H5zM9 9h2v2H9zM5 9h2v2H5zM1 9h2v2H1z" />
        </svg>
      </span>
    </footer>
  );
}

export default function App() {
  return (
    <div className="flex min-h-screen flex-col bg-[#525252] font-['Noto_Sans',sans-serif] text-[11px] leading-4">
      <TitleBar />

      <nav className="flex h-6 items-center text-white">
        <span className="ml-0.5 h-3 border-l-2 border-dotted border-[#ddd]" />
        <div className="flex pl-1">
          {menus.map((menu) => (
            <button key={menu} className="px-[7px]">{menu}</button>
          ))}
        </div>
      </nav>

      <div className="flex">
        <div className={clsx(barClass, "w-[908px] min-w-0 overflow-hidden")}>
          <Grip />
          <Tools
            items={[
              "new", "open", "close", "save", "|", "print", "preview", "|", "undo", "v", "redo", "v", "|",
              "~cut", "copy", "paste", "|", "~erase", "~editProps", "~brush", "|", "sumColumns", ">", "|",
              "zoom", "zoomIn", "zoomOut", "hand", "fit", "planes", "v", "feet", "|", "*sphere", "sun", "|",
              "*slab", "*wall", "cube", "*shade", "*frame", "filter", "|", "ruler", "tag", "|", "layers", "|", "comment",
            ]}
          />
          <Overflow />
        </div>
      </div>

      <div className="mt-px flex border-b border-[#6b7074]">
        <div className={clsx(barClass, "w-[372px]")}>
          <Grip />
          <Tools items={["~form", "~gear", "|", "table", "lines", "|", "sheet", "sheet"]} />
          <div className="relative mr-0.5 ml-px w-[146px]">
            <select
              aria-label="Estilo de texto"
              defaultValue="Arial - Azul"
              className="block h-[18px] w-full appearance-none border border-[#e4e6e8] bg-white pl-[3px] leading-4 text-black"
            >
              <option>Arial - Azul</option>
            </select>
            <span className="pointer-events-none absolute inset-y-px right-px flex w-3 items-center justify-center bg-[#aab0b5]">
              <svg viewBox="0 0 6 6" className="size-1.5" aria-hidden="true">
                <path d="M0 1h6L3 5z" fill="#4f545a" />
              </svg>
            </span>
          </div>
          <Tools items={["|", "blank", "~door"]} />
          <Overflow />
        </div>
        <div className={clsx(barClass, "w-[700px]")}>
          <Grip />
          <label htmlFor="cota" className="ml-[5px] w-[103px] text-black">Cota sobre planta:</label>
          <div className="mr-[3px] flex h-4 w-[74px] items-center bg-white">
            <input id="cota" defaultValue="0,000" className="min-w-0 flex-1 pl-[3px] text-black outline-none" />
            <span className="flex w-4 flex-col items-center gap-0.5 bg-[#ececec]">
              <button aria-label="Subir" className="h-1.5">
                <svg viewBox="0 0 6 5" className="h-1 w-1.5" aria-hidden="true"><path d="M0 4h6L3 0z" fill="#444" /></svg>
              </button>
              <button aria-label="Bajar" className="h-1.5">
                <svg viewBox="0 0 6 5" className="h-1 w-1.5" aria-hidden="true"><path d="M0 1h6L3 5z" fill="#444" /></svg>
              </button>
            </span>
          </div>
          <Tools
            items={[
              "~refreshDoc", "lock", "~updown", "~wave", "|", "grid", "gridSnap", "|", "angle", "*angleSnap", "|", "meter", "|",
              "pencil", "~region", "|", "~regionOk", "~regionNo", "|", "~selCube", "~selWire", "|", "magnet", "snapOff", "v", "|",
              "listOk", "listNo",
            ]}
          />
          <Overflow />
        </div>
        <div className={clsx(barClass, "flex-1")}>
          <span className="w-[3px]" />
          <Grip />
          <Tools items={["screen", "|", "*houseRed", "houseOpen", "houseWhite", "|", "axes", "corner", "windows", "|"]} />
          <Overflow />
        </div>
      </div>

      <main className="flex flex-1">
        <aside className="flex w-[22px] flex-col items-center self-start rounded-b bg-linear-to-r from-[#c2c8cf] to-[#979da5] pb-0.5">
          <Grip vertical />
          <Tools
            vertical
            items={[
              "links", "|", "globe", "target", "|", "building", "|", "solidCyan", "|", "solidGreen", "solidTeal", "solidRed", "|",
              "panel", "triangle", "pink", "|", "windowIn", "doorIn", "|", "redHole", "|", "wallShade",
            ]}
          />
        </aside>

        <section className="ml-0.5 flex w-[239px] shrink-0 flex-col">
          <div className="flex flex-1 flex-col border border-t-0 border-[#d5d8d9]">
            <PanelHeader title="Proyecto" />
            <div className="flex flex-1 flex-col border-2 border-[#e7eaeb]">
              <div className="flex h-[26px] items-center overflow-hidden bg-linear-to-b from-[#c8ccd0] to-[#8e96a0]">
                <Tools items={["add", "edit", "~remove", "|", "up", "down", "|", "~reload", "~sync", "box", "|", "pin", "|"]} />
              </div>
              <ProjectTree />
            </div>
          </div>
          <BottomTabs
            tabs={[
              { label: "Proyecto", icon: "yellowDir" },
              { label: "Buscar", icon: "binoculars" },
              { label: "Comprobar", icon: "verify" },
            ]}
          />
        </section>

        <div className="ml-[5px] flex min-w-0 flex-1 flex-col">
          <section className="flex flex-1 flex-col border border-t-2 border-[#8b9093]">
            <ViewTabs />
            <div className="flex-1 bg-white">
              <Scene />
            </div>
          </section>
          <section className="mt-1 border border-[#d5d8d9]">
            <PanelHeader title="Capítulos" />
            <div className="border-2 border-[#e7eaeb] bg-white pb-[7px]">
              <div className="flex h-[26px] items-center bg-linear-to-b from-[#c8ccd0] to-[#8e96a0] pl-[3px]">
                <Tools
                  items={[
                    "star", "v", "|", "~pages", "importDir", "|", "~delDir", "|", "up", "down", "|", "*pen", "#eye", "*sphere",
                    "palette", "|", "tools", "cascade", "~sync", "|", "~reload",
                  ]}
                />
              </div>
              <Chapters />
            </div>
          </section>
          <BottomTabs
            tabs={[
              { label: "Capítulos", icon: "star" },
              { label: "Errores", icon: "errors" },
              { label: "Notas", icon: "notes" },
              { label: "Usuarios", icon: "users" },
            ]}
          />
        </div>

        <aside className="ml-0.5 flex w-6 flex-col items-center self-start rounded-b bg-linear-to-r from-[#c2c8cc] to-[#8d949c]">
          <Grip vertical />
          <Tools
            vertical
            items={[
              "move", "rotate", "rotateRef", "scale", "copyMove", "mirror", "|", "parallel", "extend", "trim", "|",
              "divide", "split", "join", "bomb", "|", "crayon", "poly", "|", "swap", "hook", "|",
              "select", "flowA", "flowB", "flowC", "|", "note",
            ]}
          />
          <button aria-label="Opciones de barra" className="flex h-3 w-full items-center justify-end bg-[#474b4f] pr-1">
            <svg viewBox="0 0 6 6" className="size-1.5" aria-hidden="true"><path d="M0 0v6M2 0v6l4-3z" fill="#fff" stroke="#fff" /></svg>
          </button>
        </aside>
      </main>

      <StatusBar />
    </div>
  );
}
